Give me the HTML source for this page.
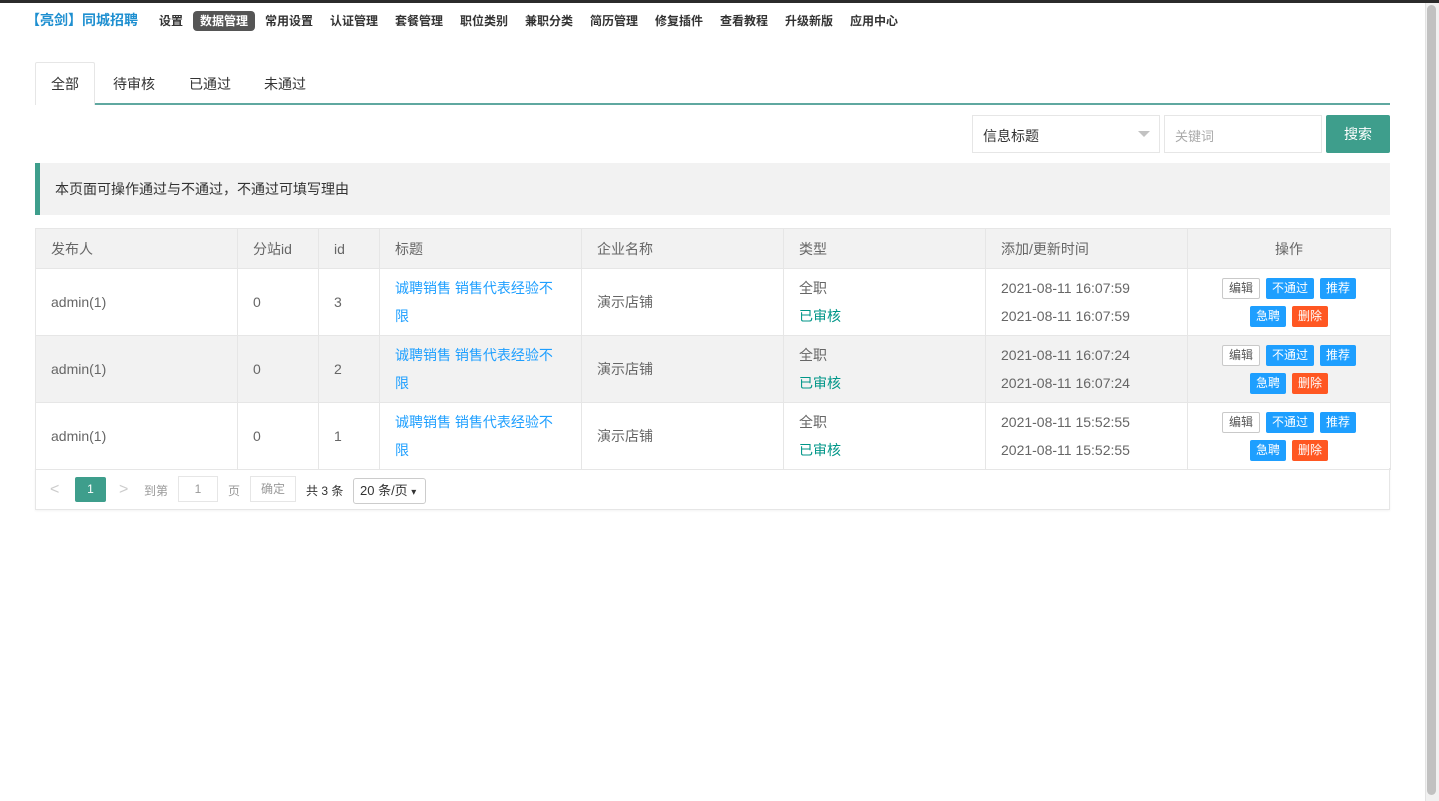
<!DOCTYPE html>
<html><head><meta charset="utf-8"><style>
*{margin:0;padding:0;box-sizing:border-box}
body{width:1439px;height:801px;background:#fff;font-family:"Liberation Sans","Noto Sans CJK SC",sans-serif;font-size:14px;color:#333;position:relative;overflow:hidden}
.a{position:absolute}
.nav span{position:absolute;top:12px;font-size:12px;font-weight:bold;color:#333;line-height:18px}
table{position:absolute;left:35px;top:228px;width:1355px;border-collapse:collapse;table-layout:fixed}
td,th{border:1px solid #e6e6e6;padding:0 15px;font-weight:normal;text-align:left;font-size:14px;color:#666;vertical-align:middle}
th{height:40px;background:#f2f2f2}
td{height:67px;line-height:28px}
tr.g td{background:#f2f2f2}
.lk{color:#1e9fff}.ok{color:#009688}
.b{display:inline-block;font-size:12px;line-height:21px;height:21px;padding:0 6px;color:#fff;background:#1e9fff;border-radius:2px;margin:0 3px}
.b.w{background:#fff;color:#555;border:1px solid #c9c9c9;line-height:19px}
.b.r{background:#ff5722}
td.op{text-align:center;line-height:21px;padding:0}
td.op div{margin:6px 0}
</style></head><body>
<div class="a" style="left:0;top:0;width:1439px;height:3px;background:#2b2b2b"></div>
<div class="a" style="left:1425px;top:3px;width:14px;height:798px;background:#f1f1f1;border-left:1px solid #e3e3e3"></div>
<div class="a" style="left:1427px;top:5px;width:9px;height:790px;background:#c1c1c1;border-radius:5px"></div>
<div class="nav">
<span style="left:26px;font-size:14px;color:#1e8fd0;top:11px">【亮剑】同城招聘</span>
<span style="left:159px">设置</span>
<span class="a" style="left:193px;top:11px;width:62px;height:20px;background:#555;border-radius:4px"></span>
<span style="left:200px;color:#fff">数据管理</span>
<span style="left:265px">常用设置</span><span style="left:330px">认证管理</span><span style="left:395px">套餐管理</span><span style="left:460px">职位类别</span><span style="left:525px">兼职分类</span><span style="left:590px">简历管理</span><span style="left:655px">修复插件</span><span style="left:720px">查看教程</span><span style="left:785px">升级新版</span><span style="left:850px">应用中心</span>
</div>
<div class="a" style="left:35px;top:103px;width:1355px;height:2px;background:#5fa8a0"></div>
<div class="a" style="left:35px;top:62px;width:60px;height:43px;border:1px solid #e6e6e6;border-bottom:none;background:#fff;border-radius:2px 2px 0 0"></div>
<div class="a" style="left:51px;top:74px;font-size:14px;color:#333">全部</div>
<div class="a" style="left:113px;top:74px;color:#333">待审核</div>
<div class="a" style="left:189px;top:74px;color:#333">已通过</div>
<div class="a" style="left:264px;top:74px;color:#333">未通过</div>
<div class="a" style="left:972px;top:115px;width:188px;height:38px;border:1px solid #e6e6e6;padding:10px;color:#333">信息标题</div>
<div class="a" style="left:1138px;top:131px;border:6px solid transparent;border-top-color:#c2c2c2;border-bottom:none"></div>
<div class="a" style="left:1164px;top:115px;width:158px;height:38px;border:1px solid #e6e6e6;padding:10px;color:#aaa;font-size:13px">关键词</div>
<div class="a" style="left:1326px;top:115px;width:64px;height:38px;background:#3e9e8c;color:#fff;text-align:center;line-height:38px;border-radius:2px">搜索</div>
<div class="a" style="left:35px;top:163px;width:1355px;height:52px;background:#f2f2f2;border-left:5px solid #3e9e8c;padding:0 15px;line-height:52px;color:#333;font-size:14px">本页面可操作通过与不通过，不通过可填写理由</div>
<table>
<colgroup><col style="width:202px"><col style="width:81px"><col style="width:61px"><col style="width:202px"><col style="width:202px"><col style="width:202px"><col style="width:202px"><col style="width:203px"></colgroup>
<tr><th>发布人</th><th>分站id</th><th>id</th><th>标题</th><th>企业名称</th><th>类型</th><th>添加/更新时间</th><th style="text-align:center">操作</th></tr>
<tr><td>admin(1)</td><td>0</td><td>3</td><td class="lk">诚聘销售 销售代表经验不限</td><td>演示店铺</td><td>全职<br><span class="ok">已审核</span></td><td>2021-08-11 16:07:59<br>2021-08-11 16:07:59</td><td class="op"><div><span class="b w">编辑</span><span class="b">不通过</span><span class="b">推荐</span></div><div><span class="b">急聘</span><span class="b r">删除</span></div></td></tr>
<tr class="g"><td>admin(1)</td><td>0</td><td>2</td><td class="lk">诚聘销售 销售代表经验不限</td><td>演示店铺</td><td>全职<br><span class="ok">已审核</span></td><td>2021-08-11 16:07:24<br>2021-08-11 16:07:24</td><td class="op"><div><span class="b w">编辑</span><span class="b">不通过</span><span class="b">推荐</span></div><div><span class="b">急聘</span><span class="b r">删除</span></div></td></tr>
<tr><td>admin(1)</td><td>0</td><td>1</td><td class="lk">诚聘销售 销售代表经验不限</td><td>演示店铺</td><td>全职<br><span class="ok">已审核</span></td><td>2021-08-11 15:52:55<br>2021-08-11 15:52:55</td><td class="op"><div><span class="b w">编辑</span><span class="b">不通过</span><span class="b">推荐</span></div><div><span class="b">急聘</span><span class="b r">删除</span></div></td></tr>
</table>
<div class="a" style="left:35px;top:468px;width:1355px;height:42px;border:1px solid #e6e6e6;border-top:none;box-shadow:0 1px 2px rgba(0,0,0,.05)"></div>
<div class="a" style="left:50px;top:481px;color:#ccc;font-size:16px">&lt;</div>
<div class="a" style="left:75px;top:477px;width:31px;height:25px;background:#3e9e8c;color:#fff;text-align:center;line-height:25px;font-size:12px;border-radius:2px">1</div>
<div class="a" style="left:119px;top:481px;color:#ccc;font-size:16px">&gt;</div>
<div class="a" style="left:144px;top:482px;color:#999;font-size:12px">到第</div>
<div class="a" style="left:178px;top:476px;width:40px;height:26px;border:1px solid #e6e6e6;text-align:center;line-height:24px;color:#999;font-size:12px">1</div>
<div class="a" style="left:228px;top:482px;color:#999;font-size:12px">页</div>
<div class="a" style="left:250px;top:476px;width:46px;height:26px;border:1px solid #e6e6e6;text-align:center;line-height:24px;color:#999;font-size:12px">确定</div>
<div class="a" style="left:306px;top:482px;color:#333;font-size:12px">共 3 条</div>
<div class="a" style="left:353px;top:478px;width:73px;height:26px;border:1px solid #ccc;border-radius:3px;padding-left:6px;line-height:24px;color:#333;font-size:13px">20 条/页 <span style="font-size:10px">▾</span></div>
</body></html>
